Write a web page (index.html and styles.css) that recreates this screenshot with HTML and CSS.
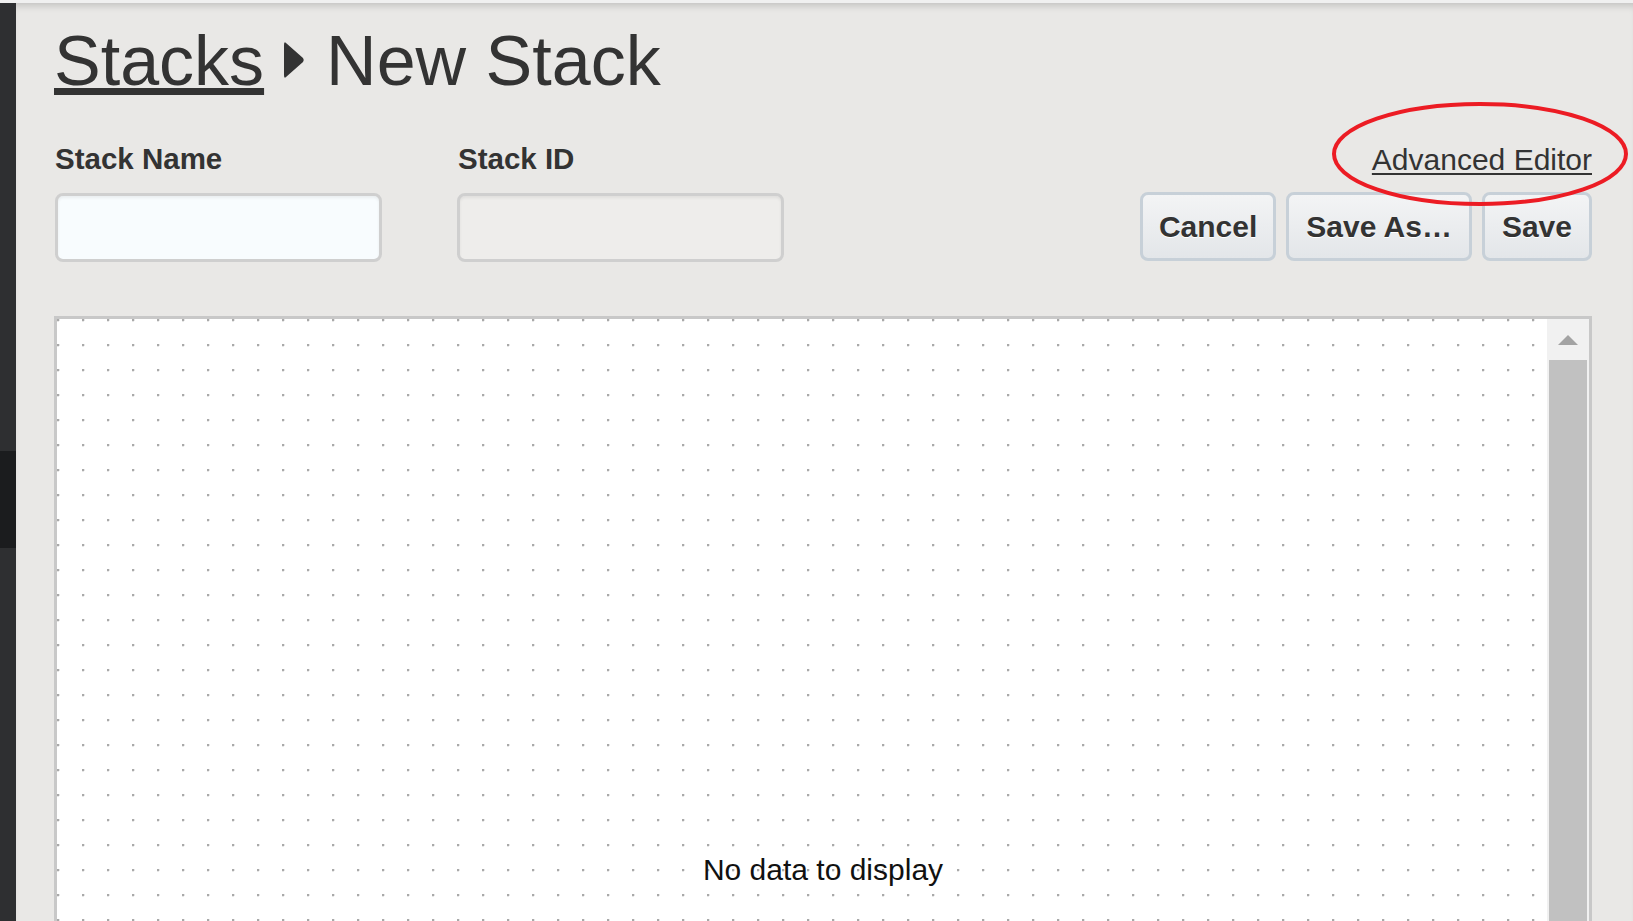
FILE: index.html
```html
<!DOCTYPE html>
<html lang="en">
<head>
<meta charset="utf-8">
<title>New Stack</title>
<link rel="stylesheet" href="styles.css">
</head>
<body>
<div class="topstrip"></div>
<div class="app">
  <aside class="sidebar"><div class="sidebar-active"></div></aside>
  <main class="main">
    <h1 class="title">
      <a class="crumb" href="#">Stacks</a>
      <svg class="crumb-sep" width="22" height="40" viewBox="0 0 22 40"><path d="M3 3 Q1 1 1 5 L1 35 Q1 39 3 37 L20 22 Q21.5 20 20 18 Z" fill="#333"/></svg>
      <span class="current">New Stack</span>
    </h1>
    <div class="form-row">
      <div class="fields">
        <div class="field">
          <label class="label">Stack Name</label>
          <div class="input input-active"></div>
        </div>
        <div class="field">
          <label class="label">Stack ID</label>
          <div class="input input-disabled"></div>
        </div>
      </div>
      <div class="actions">
        <a class="adv-link" href="#">Advanced Editor</a>
        <div class="buttons">
          <button class="btn">Cancel</button>
          <button class="btn">Save As…</button>
          <button class="btn">Save</button>
        </div>
      </div>
    </div>
    <div class="canvas">
      <div class="grid"></div>
      <div class="scrollbar">
        <div class="scroll-up"><span class="arrow"></span></div>
        <div class="scroll-thumb"></div>
      </div>
      <div class="empty">No data to display</div>
    </div>
  </main>
</div>
<svg class="annotation" width="298" height="106" viewBox="0 0 298 106"><ellipse cx="149" cy="53" rx="146" ry="50" fill="none" stroke="#ec1c24" stroke-width="4"/></svg>
</body>
</html>
```
FILE: styles.css
```css
html, body {
  margin: 0;
  padding: 0;
  height: 100%;
  overflow: hidden;
}
body {
  background: #f0f0f0;
  font-family: "Liberation Sans", Arial, sans-serif;
  color: #333;
  display: flex;
  flex-direction: column;
  position: relative;
}
.topstrip {
  height: 3px;
  flex: none;
  background: #f0f0f0;
}
.app {
  flex: 1;
  display: flex;
  min-height: 0;
}
.sidebar {
  width: 16px;
  flex: none;
  background: #2e2f31;
}
.sidebar-active {
  margin-top: 448px;
  height: 97px;
  background: #1b1c1e;
}
.main {
  flex: 1;
  background: #e9e8e6;
  box-shadow: inset 0 7px 7px -4px rgba(0, 0, 0, 0.16);
  padding: 19px 41px 0 38px;
  min-width: 0;
}
.title {
  margin: 0;
  font-weight: 400;
  font-size: 70px;
  line-height: 79px;
  display: flex;
  align-items: center;
  color: #333;
}
.crumb {
  color: #333;
  text-decoration: underline;
  text-decoration-thickness: 7px;
  text-underline-offset: 3px;
}
.crumb-sep {
  margin: 0 21px 0 19px;
  position: relative;
  top: -2px;
}
.form-row {
  margin-top: 41px;
  display: flex;
  justify-content: space-between;
  align-items: flex-end;
}
.fields {
  display: flex;
  gap: 75px;
}
.field {
  display: flex;
  flex-direction: column;
}
.label {
  font-weight: 700;
  font-size: 29.5px;
  line-height: 34px;
  margin-bottom: 17px;
  padding-left: 1px;
}
.input {
  width: 327px;
  height: 69px;
  box-sizing: border-box;
  border: 3px solid #cfcfcf;
  border-radius: 8px;
  box-shadow: inset 0 2px 3px rgba(0, 0, 0, 0.06);
}
.input-active {
  background: #f8fcfe;
  margin-left: 1px;
}
.input-disabled {
  background: #eeedeb;
}
.actions {
  display: flex;
  flex-direction: column;
  align-items: flex-end;
}
.adv-link {
  font-size: 30px;
  line-height: 34px;
  color: #333;
  text-decoration: underline;
  text-decoration-thickness: 2px;
  text-underline-offset: 3px;
  margin-bottom: 15px;
}
.buttons {
  display: flex;
  gap: 10px;
  margin-bottom: 1px;
}
.btn {
  height: 69px;
  box-sizing: border-box;
  padding: 0 17px;
  border: 3px solid #c7d0d8;
  border-radius: 8px;
  background: linear-gradient(#f3f4f5, #e3e6e9);
  font-family: "Liberation Sans", Arial, sans-serif;
  font-weight: 700;
  font-size: 30px;
  color: #333;
  text-shadow: 0 1px 0 #fff;
  cursor: pointer;
}
.btn:first-child {
  padding: 0 16px;
}
.canvas {
  margin-top: 54px;
  height: 700px;
  border: 3px solid #c8c8c8;
  background: #fff;
  display: flex;
  position: relative;
}
.grid {
  flex: 1;
  background-image: radial-gradient(circle at 1px 1px, #a9a9a9 1px, rgba(255, 255, 255, 0) 1.8px);
  background-size: 25px 25px;
}
.scrollbar {
  width: 42px;
  flex: none;
  background: #f1f1f1;
  display: flex;
  flex-direction: column;
}
.scroll-up {
  height: 41px;
  display: flex;
  justify-content: center;
  padding-top: 16px;
  box-sizing: border-box;
}
.arrow {
  width: 0;
  height: 0;
  border-left: 10px solid transparent;
  border-right: 10px solid transparent;
  border-bottom: 10px solid #a3a3a3;
}
.scroll-thumb {
  flex: 1;
  margin: 0 2px;
  background: #c1c1c1;
}
.empty {
  position: absolute;
  left: 0;
  right: 0;
  top: 534px;
  text-align: center;
  font-size: 30px;
  line-height: 34px;
  color: #111;
}
.annotation {
  position: absolute;
  left: 1331px;
  top: 101px;
}
```
